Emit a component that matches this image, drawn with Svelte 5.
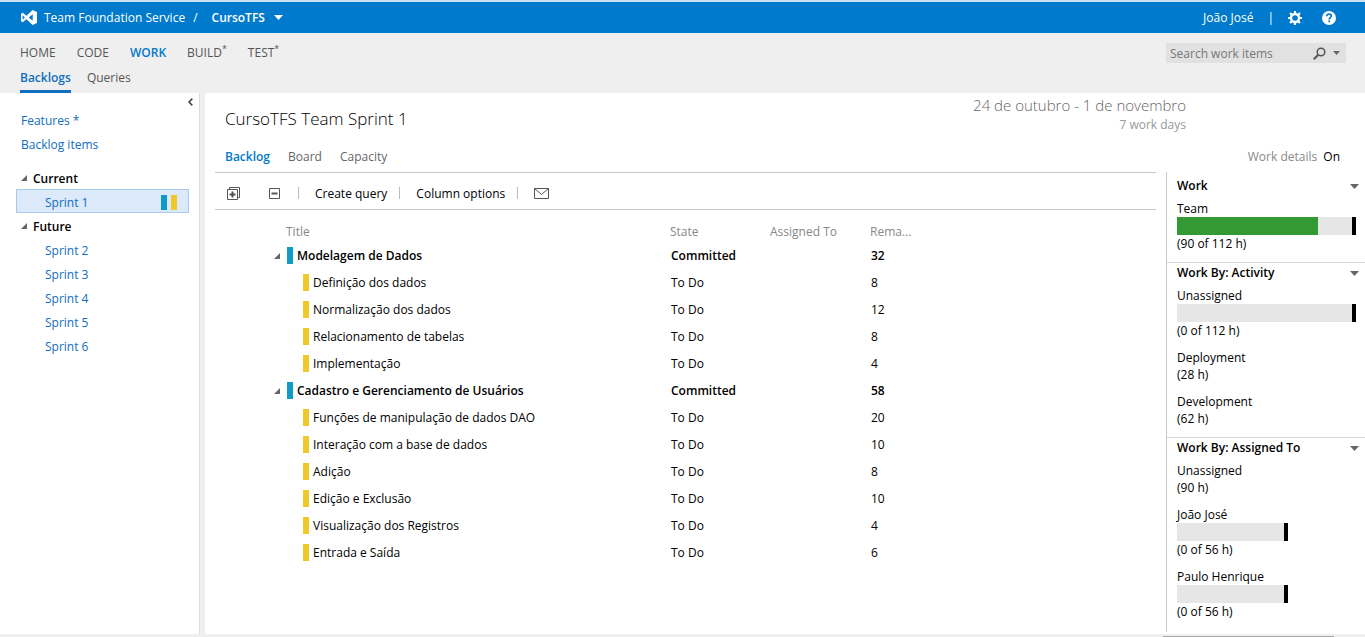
<script lang="ts">
  type Task = { title: string; hours: number };
  type Story = { title: string; hours: number; open: boolean; tasks: Task[] };
  type Load = { name: string; done: number; capacity?: number };

  const hubs = [
    { label: 'HOME' },
    { label: 'CODE' },
    { label: 'WORK', active: true },
    { label: 'BUILD', star: true },
    { label: 'TEST', star: true },
  ];

  const future = ['Sprint 2', 'Sprint 3', 'Sprint 4', 'Sprint 5', 'Sprint 6'];

  let stories: Story[] = $state([
    {
      title: 'Modelagem de Dados',
      hours: 32,
      open: true,
      tasks: [
        { title: 'Definição dos dados', hours: 8 },
        { title: 'Normalização dos dados', hours: 12 },
        { title: 'Relacionamento de tabelas', hours: 8 },
        { title: 'Implementação', hours: 4 },
      ],
    },
    {
      title: 'Cadastro e Gerenciamento de Usuários',
      hours: 58,
      open: true,
      tasks: [
        { title: 'Funções de manipulação de dados DAO', hours: 20 },
        { title: 'Interação com a base de dados', hours: 10 },
        { title: 'Adição', hours: 8 },
        { title: 'Edição e Exclusão', hours: 10 },
        { title: 'Visualização dos Registros', hours: 4 },
        { title: 'Entrada e Saída', hours: 6 },
      ],
    },
  ]);

  const panels: { title: string; items: Load[] }[] = [
    { title: 'Work', items: [{ name: 'Team', done: 90, capacity: 112 }] },
    {
      title: 'Work By: Activity',
      items: [
        { name: 'Unassigned', done: 0, capacity: 112 },
        { name: 'Deployment', done: 28 },
        { name: 'Development', done: 62 },
      ],
    },
    {
      title: 'Work By: Assigned To',
      items: [
        { name: 'Unassigned', done: 90 },
        { name: 'João José', done: 0, capacity: 56 },
        { name: 'Paulo Henrique', done: 0, capacity: 56 },
      ],
    },
  ];

  let closed: Record<string, boolean> = $state({});
  let search = $state('');

  // a single person's track is scaled against the 90 h still unassigned
  const trackWidth = (capacity: number) => Math.min(100, Math.round((capacity / 90) * 100));

  function setAll(open: boolean) {
    stories.forEach((s) => (s.open = open));
  }
</script>

{#snippet caret()}
  <svg width="9" height="5" viewBox="0 0 9 5" aria-hidden="true"><path d="M0 0h9L4.5 5z" fill="currentColor" /></svg>
{/snippet}

{#snippet twisty()}
  <svg width="6" height="6" viewBox="0 0 6 6" aria-hidden="true"><path d="M6 0v6H0z" fill="#666" /></svg>
{/snippet}

<div class="page">
  <header class="topbar">
    <svg class="logo" width="16" height="15" viewBox="0 0 16 15" aria-hidden="true">
      <path fill="#fff" fill-rule="evenodd" d="M11.500 0 16 2v11l-4.500 2L5.500 9.200 1.800 12.200 0 11.300V3.700L1.800 2.800l3.700 3L11.500 0zM11.700 4.300 7.800 7.500l3.900 3.200zM1.600 5.300v4.400l2.200-2.200z" />
    </svg>
    <a class="product" href="#home">Team Foundation Service</a>
    <span class="slash">/</span>
    <button class="project"><b>CursoTFS</b>{@render caret()}</button>
    <div class="account">
      <a href="#profile">João José</a>
      <span class="bar">|</span>
      <button aria-label="Settings">
        <svg width="14" height="14" viewBox="0 0 14 14" fill="none" stroke="#fff">
          <circle cx="7" cy="7" r="4" stroke-width="2.400" />
          <path d="M7 0v3M7 11v3M0 7h3M11 7h3M2.050 2.050l1.900 1.900M10.050 10.050l1.900 1.900M2.050 11.950l1.900-1.900M10.050 3.950l1.900-1.900" stroke-width="2.200" />
        </svg>
      </button>
      <button aria-label="Help">
        <svg width="14" height="14" viewBox="0 0 14 14">
          <circle cx="7" cy="7" r="7" fill="#fff" />
          <path d="M4.700 5.300C4.800 3.800 5.800 3.200 7 3.200c1.300 0 2.300.7 2.300 1.900 0 1.500-2.100 1.600-2.100 3.400" fill="none" stroke="#007acc" stroke-width="1.700" />
          <rect x="6.300" y="9.500" width="1.800" height="1.700" fill="#007acc" />
        </svg>
      </button>
    </div>
  </header>

  <div class="hubs">
    <nav class="hub-nav">
      {#each hubs as hub}
        <a href="#{hub.label.toLowerCase()}" class:active={hub.active}>{hub.label}{#if hub.star}<sup>*</sup>{/if}</a>
      {/each}
    </nav>
    <nav class="sub-nav">
      <a href="#backlogs" class="active">Backlogs</a>
      <a href="#queries">Queries</a>
    </nav>
    <div class="search">
      <input type="text" aria-label="Search work items" placeholder="Search work items" bind:value={search} />
      <button aria-label="Search">
        <svg width="13" height="13" viewBox="0 0 13 13"><circle cx="8" cy="5" r="3.800" fill="none" stroke="#555" stroke-width="1.500" /><path d="M5.300 7.700.8 12.200" stroke="#555" stroke-width="2" /></svg>
      </button>
      <button class="more" aria-label="Search options">
        <svg width="7" height="4" viewBox="0 0 7 4"><path d="M0 0h7L3.500 4z" fill="#666" /></svg>
      </button>
    </div>
  </div>

  <div class="body">
    <aside class="sidebar">
      <button class="collapse" aria-label="Collapse pane">
        <svg width="5" height="8" viewBox="0 0 5 8"><path d="M4.300.6 1 4l3.300 3.400" fill="none" stroke="#444" stroke-width="1.600" /></svg>
      </button>
      <a class="row" href="#features">Features *</a>
      <a class="row" href="#items">Backlog items</a>
      <div class="tree">
        <div class="row group">{@render twisty()}Current</div>
        <a class="row sprint selected" href="#sprint-1">Sprint 1<span class="chips"><i class="chip blue"></i><i class="chip yellow"></i></span></a>
        <div class="row group">{@render twisty()}Future</div>
        {#each future as name}
          <a class="row sprint" href="#{name.toLowerCase().replace(' ', '-')}">{name}</a>
        {/each}
      </div>
    </aside>

    <div class="splitter"></div>

    <main>
      <div class="title-area">
        <div class="heading">
          <h1>CursoTFS Team Sprint 1</h1>
          <div class="dates">
            <div class="range">24 de outubro - 1 de novembro</div>
            <div>7 work days</div>
          </div>
        </div>
        <div class="views">
          <nav>
            <a href="#backlog" class="active">Backlog</a>
            <a href="#board">Board</a>
            <a href="#capacity">Capacity</a>
          </nav>
          <div class="details-toggle">Work details <button>On</button></div>
        </div>
      </div>

      <div class="split">
        <section class="backlog">
          <div class="toolbar">
            <button aria-label="Expand all" onclick={() => setAll(true)}>
              <svg width="13" height="13" viewBox="0 0 13 13" fill="none" stroke="#555"><path d="M2.500 2.500V.5h10v10h-2" /><path d="M.5 2.500h10v10H.5z" /><path d="M2.500 7.500h6M5.500 4.500v6" stroke-width="2" /></svg>
            </button>
            <button class="minus" aria-label="Collapse all" onclick={() => setAll(false)}>
              <svg width="11" height="11" viewBox="0 0 11 11" fill="none" stroke="#555"><path d="M.5.5h10v10H.5z" /><path d="M2.500 5.500h6" stroke-width="2" /></svg>
            </button>
            <span class="sep"></span>
            <button>Create query</button>
            <span class="sep"></span>
            <button>Column options</button>
            <span class="sep"></span>
            <button aria-label="Send by email">
              <svg width="15" height="11" viewBox="0 0 15 11" fill="none" stroke="#555"><path d="M.5.5h14v10H.5z" /><path d="m.5.5 7 6 7-6" /></svg>
            </button>
          </div>

          <table>
            <colgroup><col class="c-title" /><col class="c-mid" /><col class="c-mid" /><col /></colgroup>
            <thead>
              <tr><th class="t">Title</th><th>State</th><th>Assigned To</th><th>Rema...</th></tr>
            </thead>
            <tbody>
              {#each stories as story}
                <tr class="story">
                  <td>
                    <div class="cell">
                      <button aria-label="Toggle {story.title}" onclick={() => (story.open = !story.open)}>{@render twisty()}</button>
                      <i class="mark blue"></i>{story.title}
                    </div>
                  </td>
                  <td>Committed</td><td></td><td>{story.hours}</td>
                </tr>
                {#if story.open}
                  {#each story.tasks as task}
                    <tr>
                      <td><div class="cell task"><i class="mark yellow"></i>{task.title}</div></td>
                      <td>To Do</td><td></td><td>{task.hours}</td>
                    </tr>
                  {/each}
                {/if}
              {/each}
            </tbody>
          </table>
        </section>

        <aside class="details">
          {#each panels as panel}
            <section>
              <h2>
                {panel.title}
                <button aria-label="Toggle {panel.title}" onclick={() => (closed[panel.title] = !closed[panel.title])}>{@render caret()}</button>
              </h2>
              {#if !closed[panel.title]}
                {#each panel.items as item}
                  <div class="load">
                    <div>{item.name}</div>
                    {#if item.capacity}
                      <div class="track" style="width:{trackWidth(item.capacity)}%">
                        <div class="fill" style="width:{(item.done / item.capacity) * 100}%"></div>
                      </div>
                      <div>({item.done} of {item.capacity} h)</div>
                    {:else}
                      <div>({item.done} h)</div>
                    {/if}
                  </div>
                {/each}
              {/if}
            </section>
          {/each}
        </aside>
      </div>
    </main>
  </div>

  <footer><div class="thumb"></div></footer>
</div>

<style>
  :global(body) { background: #fff; }
  .page { min-height: 100vh; display: flex; flex-direction: column; box-sizing: border-box; font: 12px/17px "Segoe UI", "Open Sans", "Noto Sans", sans-serif; color: #000; }
  b, h2 { font-weight: 600; }
  a { color: inherit; text-decoration: none; }
  button { font: inherit; color: inherit; background: none; border: 0; padding: 0; cursor: pointer; display: inline-flex; align-items: center; }
  svg { display: block; flex: none; }

  .topbar { display: flex; align-items: center; height: 31px; padding: 0 29px 0 21px; border-top: 2px solid #cfe3f2; background: #007acc; color: #fff; }
  .logo { margin-right: 7px; }
  .slash { margin: 0 14px 0 8px; }
  .project { gap: 9px; }
  .account { display: flex; align-items: center; margin-left: auto; }
  .bar { margin: 0 14px; }
  .account button + button { margin-left: 20px; }

  .hubs { display: grid; grid-template-columns: 1fr 180px; align-items: start; padding: 10px 19px 0 20px; background: #efefef; color: #555; }
  .hub-nav { display: flex; gap: 21px; line-height: 20px; }
  .hub-nav sup { font-size: 9px; line-height: 9px; vertical-align: 5px; }
  .sub-nav { grid-column: 1; display: flex; gap: 16px; margin-top: 5px; line-height: 20px; }
  .sub-nav a { padding-bottom: 2px; border-bottom: 3px solid transparent; }
  .active { color: #106ebe; font-weight: 600; }
  .hub-nav .active { color: #007acc; }
  .sub-nav .active { border-color: #106ebe; }
  .search { grid-column: 2; grid-row: 1; display: flex; align-items: center; height: 20px; padding-right: 6px; background: #e1e1e1; }
  .search input { flex: 1; min-width: 0; padding: 0 4px; border: 0; outline: 0; background: none; font: inherit; color: #333; }
  .search input::placeholder { color: #777; opacity: 1; }
  .more { margin-left: 7px; }

  .body { flex: 1; display: flex; }
  .sidebar { position: relative; flex: none; width: 199px; box-sizing: border-box; padding: 14px 10px 0 16px; color: #106ebe; }
  .collapse { position: absolute; top: 5px; right: 6px; }
  .row { display: flex; align-items: center; box-sizing: border-box; height: 24px; padding: 2px 0 0 5px; }
  .tree { margin-top: 10px; }
  .group { gap: 6px; color: #000; font-weight: 600; }
  .sprint { padding-left: 29px; }
  .selected { padding: 2px 11px 0 28px; border: 1px solid #a9c9ea; background: #dbe9fa; }
  .chips { display: flex; gap: 4px; margin-left: auto; }
  .chip, .mark { width: 6px; }
  .chip { height: 15px; }
  .blue { background: #0f9bc5; }
  .yellow { background: #f0c929; }
  .splitter { flex: none; width: 6px; box-sizing: border-box; border-left: 1px solid #ddd; background: #efefef; }

  main { flex: 1; min-width: 0; display: flex; flex-direction: column; }
  .title-area { height: 79px; }
  .heading { display: flex; justify-content: space-between; padding: 2px 179px 0 20px; }
  h1 { margin: 11px 0 0; font-size: 17px; line-height: 26px; font-weight: 300; color: #000; }
  .dates { text-align: right; color: #999; }
  .range { font-size: 15px; line-height: 21px; font-weight: 300; color: #666; }
  .views { display: flex; justify-content: space-between; padding: 15px 25px 0 20px; color: #666; }
  .views nav { display: flex; gap: 18px; }
  .views .active { color: #007acc; }
  .details-toggle { color: #888; }
  .details-toggle button { margin-left: 3px; color: #000; }

  .split { flex: 1; display: grid; grid-template-columns: 1fr 199px; column-gap: 10px; padding-left: 10px; }
  .toolbar { display: flex; align-items: center; height: 32px; padding: 4px 0 0 12px; border: solid #c8c8c8; border-width: 1px 0; }
  .minus { margin: 0 18px 0 29px; }
  .sep { width: 1px; height: 12px; margin: 0 16px 0 12px; background: #bbb; }
  .minus + .sep { margin-left: 0; }

  table { width: 100%; margin-top: 10px; border-collapse: collapse; table-layout: fixed; }
  .c-title { width: 455px; }
  .c-mid { width: 100px; }
  th { height: 22px; padding: 0; text-align: left; font-weight: 400; color: #888; }
  .t { padding-left: 71px; }
  td { height: 27px; padding: 0 0 0 1px; }
  .story { font-weight: 600; }
  .cell { display: flex; align-items: center; white-space: nowrap; padding-left: 58px; }
  .cell button { margin-right: 7px; }
  .mark { height: 17px; margin-right: 4px; }
  .task { padding-left: 87px; }

  .details { border-left: 1px solid #c8c8c8; padding-top: 4px; margin-bottom: 2px; }
  .details section { padding: 0 9px 0 10px; }
  .details section + section { border-top: 1px solid #d0d7dc; }
  h2 { display: flex; align-items: center; justify-content: space-between; margin: 0 -3px 4px 0; font-size: 12px; line-height: 20px; }
  h2 button { color: #666; }
  .load { padding-bottom: 10px; }
  .track { box-sizing: border-box; height: 18px; border-right: 4px solid #000; background: #e6e6e6; }
  .fill { height: 100%; background: #339933; }

  footer { height: 3px; background: #efefef; }
  .thumb { width: 171px; height: 1px; margin: 0 31px 0 auto; border-top: 2px solid #efefef; background: #aaa; }
</style>
